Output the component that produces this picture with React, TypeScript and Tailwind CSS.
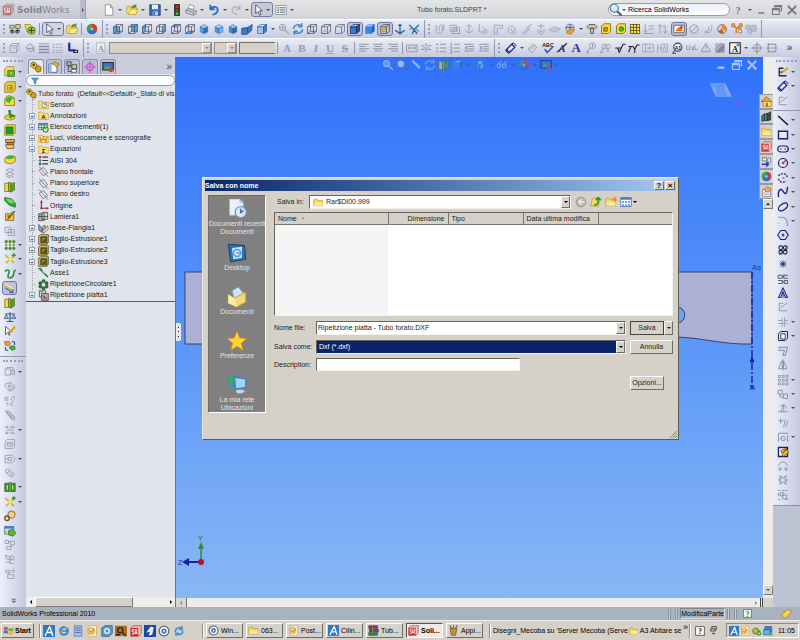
import type { ReactNode } from "react";

const cubeBack = "M2 5l4-3h8v9l-4 3M14 2l-4 3";
const cubeHidden = "M6 2v9h8M6 11l-4 3";
const faces = {
  front: "M2 5h8v9H2z",
  back: "M6 2h8v9H6z",
  left: "M2 5l4-3v9l-4 3z",
  right: "M10 5l4-3v9l-4 3z",
  top: "M2 5l4-3h8l-4 3z",
  bottom: "M2 14l4-3h8l-4 3z",
};

function cube(face?: keyof typeof faces, hidden = true, line = "#454b58"): ReactNode {
  return (
    <g fill="none" stroke={line} strokeWidth=".9">
      {face && <path d={faces[face]} fill="#5aa2e6" stroke="none" />}
      <path d={faces.front} />
      <path d={cubeBack} />
      {hidden && <path d={cubeHidden} />}
    </g>
  );
}

function solid(front: string, top: string, side: string, line = "#1c4f91"): ReactNode {
  return (
    <g stroke={line} strokeWidth=".8">
      <path d={faces.front} fill={front} />
      <path d={faces.top} fill={top} />
      <path d={faces.right} fill={side} />
    </g>
  );
}

function iso(left: string, right: string, top: string): ReactNode {
  return (
    <g stroke="#2a65a8" strokeWidth=".7">
      <path d="M3 5l5 2v7l-5-2z" fill={left} />
      <path d="M13 5l-5 2v7l5-2z" fill={right} />
      <path d="M3 5l5-3 5 3-5 2z" fill={top} />
    </g>
  );
}

function line(d: string, color = "#a0a3af", width = 1.3): ReactNode {
  return <path d={d} fill="none" stroke={color} strokeWidth={width} strokeLinecap="round" strokeLinejoin="round" />;
}

function letter(ch: string, color: string, extra = "", size = 15): ReactNode {
  return (
    <text x="8" y="13.5" textAnchor="middle" fontSize={size} fontWeight="bold" fill={color} className={"font-['Liberation_Serif',serif] " + extra}>
      {ch}
    </text>
  );
}

const folder = (
  <g stroke="#b08a1c" strokeWidth=".8">
    <path d="M1 13V4l1-1h4l1 2h7v8z" fill="#f5d65c" />
    <path d="M2 8h12v5H2z" fill="#fbe98f" stroke="none" />
  </g>
);

const treeFolder = <path d="M1 14V3h5l1 2h8v9z" fill="#fbe27a" stroke="#c9a22c" />;

const icons: Record<string, ReactNode> = {
  sw: (
    <g>
      <path d="M1 4l4-3h10v10l-4 4H1z" fill="#b9a5a8" />
      <path d="M1 4h10v11H1z" fill="#a8757a" />
      {line("M5 6H3v3h2v3H3M7 6v6l1-2 1 2V6", "#f2e8e8", 1.2)}
    </g>
  ),
  new: <path d="M3 1h7l3 4v10H3z M10 1v4h3" fill="#fff" stroke="#80838c" />,
  open: (
    <g>
      {folder}
      <path d="M3 14l3-7h10l-3 7z" fill="#ffe978" stroke="#b08a1c" strokeWidth=".8" />
      {line("M8 5c1-4 4-3 5-1M13 1v3h-3", "#2f9a2f", 1.6)}
    </g>
  ),
  save: (
    <g>
      <path d="M1 1h14v14H1z" fill="#2d6cc0" stroke="#173f78" />
      <path d="M4 1h8v6H4z" fill="#e6f0fb" />
      <path d="M5 10h7v5H5z" fill="#c3cbd8" />
      <path d="M6 11h2v3H6z" fill="#1e3f77" />
    </g>
  ),
  traffic: (
    <g>
      <rect x="4" y="0" width="8" height="16" rx="1" fill="#3b3534" />
      <circle cx="8" cy="3.5" r="2.2" fill="#d9281f" />
      <circle cx="8" cy="8" r="1.8" fill="#6b5b2a" />
      <circle cx="8" cy="12.5" r="2.2" fill="#37b54a" />
    </g>
  ),
  print: (
    <g stroke="#7b7e88" strokeWidth=".9">
      <path d="M4 6l2-5 6 2-1 4z" fill="#fff" />
      <path d="M1 8l4-2 10 3v4l-4 2-10-3z" fill="#c6c9d2" />
      <path d="M1 8l10 3v4M11 11l4-2" fill="none" />
    </g>
  ),
  undo: line("M3 2v5h5M3 7c3-5 10-4 10 1 0 3-3 5-6 6", "#2e6fc0", 2.4),
  redo: line("M13 2v5H8M13 7C10 2 3 3 3 8c0 3 3 5 6 6", "#b4b7c0", 2),
  cursor: <path d="M5 1v12l3-3 2 5 2-1-2-5h4z" fill="#fff" stroke="#33394a" />,
  checklist: (
    <g>
      <path d="M1 2h14v12H1z" fill="#f4f7f4" stroke="#7c8694" />
      {line("M7 5h6M7 8h6M7 11h6", "#5d6978")}
      {line("M3 5l1 1 1-2M3 8l1 1 1-2M3 11l1 1 1-2", "#2c9b49")}
    </g>
  ),
  magnify: (
    <g>
      {line("M9 9l6 6", "#5a6b80", 3)}
      <circle cx="6.5" cy="6.5" r="5" fill="#d4e6f5" stroke="#5b7894" strokeWidth="1.4" />
      <path d="M4 6c0-2 1-3 3-3" fill="none" stroke="#fff" strokeWidth="1.4" />
    </g>
  ),
  minimize: <path d="M3 11h8v2H3z" fill="#777a83" />,
  restore: <path d="M5 5V2h9v7h-3M2 6h9v8H2zM2 7.5h9M5 3.500h9" fill="none" stroke="#777a83" strokeWidth="1.5" />,
  close: line("M3 3l10 10M13 3L3 13", "#777a83", 2.4),
  hudMin: <path d="M2 10h9v3H2z" fill="#a9c6f5" />,
  hudRestore: <path d="M5 5V2h9v7h-3M2 6h9v8H2zM2 7.500h9M5 3.500h9" fill="none" stroke="#a9c6f5" strokeWidth="1.500" />,
  hudClose: line("M3 3l10 10M13 3L3 13", "#a9c6f5", 2.600),
  help: letter("?", "#777a83", "", 14),
  gridA: (
    <g>
      <path d="M1 3h6v4H1zM9 2h6v5H9z" fill="#e8d35c" stroke="#4d5462" />
      {line("M2 10h4M2 12h12M9 10h5M4 9v5M11 8v6", "#34383f")}
    </g>
  ),
  target: (
    <g>
      <path d="M1 2h7l3 3v7H4z" fill="#f1d53c" stroke="#8a7416" strokeWidth=".8" />
      <circle cx="10" cy="10" r="5" fill="#7fc341" stroke="#4e7a1c" />
      {line("M7 10h6M10 7v6", "#274f10")}
    </g>
  ),
  pie: (
    <g>
      <circle cx="8" cy="8" r="7" fill="#2d6ed0" />
      <path d="M8 8V1a7 7 0 0 1 6 10z" fill="#de3a2b" />
      <path d="M8 8V1a7 7 0 0 0-6.200 10z" fill="#3aa946" />
      <circle cx="8" cy="8" r="2" fill="#fff" opacity=".5" />
    </g>
  ),
  cFront: cube("front"),
  cBack: cube("back"),
  cLeft: cube("left"),
  cRight: cube("right"),
  cTop: cube("top"),
  cBottom: cube("bottom"),
  iso1: iso("#5aa0df", "#2f6fb9", "#a6d2f5"),
  iso2: iso("#4f94d8", "#78b3e8", "#b9dcf8"),
  iso3: iso("#3f83cc", "#2b66ad", "#9accf2"),
  wedge: <path d="M1 7l8-1 6-4-1 8-6 5H1z M9 6v8" fill="#3b7fc9" stroke="#174275" />,
  solidBlue: solid("#9cc6ee", "#d2e7fa", "#3e80c9"),
  zoomGrey: (
    <g>
      <circle cx="6" cy="6" r="4" fill="none" stroke="#a4a7b3" strokeWidth="1.500" />
      {line("M9 9l5 5M4 6h4M6 4v4", "#a4a7b3", 1.6)}
    </g>
  ),
  zoomFit: (
    <g>
      <circle cx="6" cy="6" r="4" fill="#7fb0f5" stroke="#c8dcf8" strokeWidth="1.500" />
      {line("M9 9l5 5", "#d9c88c", 2.200)}
    </g>
  ),
  refresh: line("M2 7c1-5 8-6 11-3M13 1v4H9M14 9c-1 5-8 6-11 3M3 15v-4h4", "#3f86cd", 2),
  refreshLt: line("M2 7c1-5 8-6 11-3M13 1v4H9M14 9c-1 5-8 6-11 3M3 15v-4h4", "#8fbcf5", 1.600),
  pen: line("M3 3l9 9M4 2l9 9", "#c9def8", 1.600),
  wire: cube(),
  wireDash: (
    <g>
      {cube(undefined, false)}
      <path d={cubeHidden} fill="none" stroke="#7b7f8a" strokeDasharray="1.500 1.500" />
    </g>
  ),
  wireOpen: cube(undefined, false, "#5a5e68"),
  shadedEdge: solid("#2f7bd2", "#8fc4f2", "#1b56a3", "#0b1e3e"),
  shaded: solid("#3c86dd", "#9accf5", "#2462b4", "#3c86dd"),
  section: (
    <g>
      {cube(undefined, false)}
      <path d="M4 11V8h3l3-3v3l-3 4z" fill="#f4d41f" stroke="#6c5b08" strokeWidth=".7" />
    </g>
  ),
  axis: (
    <g>
      {line("M8 2v11", "#1f6db0", 1.800)}
      <path d="M6 13l2 3 2-3z" fill="#1f6db0" />
      {line("M2 10l6 4 6-4M6 3h4", "#2c5470", 1.500)}
    </g>
  ),
  axisCut: (
    <g>
      {line("M2 3l6 6 4 5M8 9L6 14M8 9l6-6", "#1f6db0", 1.800)}
      {line("M2 8h4M11 8l3 3", "#36a0c9", 1.500)}
    </g>
  ),
  clip: line("M3 3v7c0 5 8 5 8 0V5c0-3-4-3-4 0v5M13 2v8"),
  solidGrey: line("M2 3h8v8H2zM5 6h9v8H5zM7 8h4v3H7z"),
  anchor: line("M8 2v11M5 4h6M3 9c0 5 10 5 10 0"),
  hook: line("M3 2v10h4M7 5l4 4-3 5M11 9c3-1 3 4 0 5"),
  corner: line("M3 14V3h11v4H7v7z"),
  swirl: line("M13 12c-5 4-11 1-10-4s9-5 9 0-6 3-5 0"),
  ramp: line("M2 14l5-4 2-5 5-3M5 14l4-3 2-5"),
  press: line("M8 1v7M4 4h8M3 9l5 3 5-3M3 12l5 3 5-3"),
  sheetG: line("M1 9l6-4 8 3-6 4zM5 9l5-1"),
  globe: (
    <g>
      <circle cx="8" cy="7" r="5.500" fill="#cfd5df" stroke="#576274" />
      <path d="M8 7l6 3-5 5-6-2z" fill="#f29b24" stroke="#9a5b10" strokeWidth=".7" />
      {line("M3 6h9M8 2v5", "#576274")}
    </g>
  ),
  post: (
    <g>
      <path d="M1 5l3-3h8l3 3-2 2H3z" fill="#e3c58a" stroke="#40444e" />
      <path d="M6 7h4v7H6z" fill="#bcc1ca" stroke="#40444e" />
    </g>
  ),
  boxY: (
    <g stroke="#75640a">
      <path d="M2 4l3-3h9v10l-3 3H2z" fill="#f7dc2b" />
      <path d="M5 6h5v5H5z" fill="#b5941a" />
    </g>
  ),
  boxG: (
    <g stroke="#75640a">
      <path d="M2 4l3-3h9v10l-3 3H2z" fill="#f7dc2b" />
      <circle cx="8.500" cy="8" r="3" fill="#43b738" stroke="#1d6b17" />
    </g>
  ),
  boxGrid: <path d="M2 2h12v12H2zM2 6h12M2 10h12M6 2v12M10 2v12" fill="#ffe24b" stroke="#4a3c05" />,
  dimDown: line("M3 2v10M1 10l2 3 2-3M8 4h6M8 8h6M2 14h12"),
  dimUp: line("M4 14V3M2 5l2-3 2 3M8 4h2M11 13V4M13 11l-2 3-2-3"),
  photo: (
    <g>
      <path d="M1 3h14v10H1z" fill="#f7f7f7" stroke="#44454f" />
      <path d="M3 11l5-6 6 6z" fill="#e5721a" />
      <circle cx="11" cy="6" r="2" fill="#c63d11" />
    </g>
  ),
  sphereG: (
    <g fill="none" stroke="#9497a3" strokeWidth="1.300">
      <circle cx="8" cy="8" r="5.500" />
      <path d="M4 12L12 4" />
    </g>
  ),
  shellG: line("M13 3c1 9-3 11-9 10 4-1 6-4 5-8M4 11c2 1 4 0 5-2"),
  sphereO: (
    <g>
      <circle cx="8" cy="8" r="6" fill="#c2cedd" stroke="#5c6880" />
      <path d="M8 8V2a6 6 0 0 1 5 9z" fill="#ef8b22" />
      <path d="M8 8l-5 3a6 6 0 0 0 7 2z" fill="#c65d12" />
    </g>
  ),
  network: (
    <g>
      {line("M3 3l4 4v6M7 7l6-4M7 7h6v6", "#e57d18", 2)}
      <path d="M1 1h4v4H1zM11 1h4v4h-4z" fill="#f6ad55" stroke="#935312" strokeWidth=".8" />
      <path d="M10 9h4v4h-4z" fill="#fff" stroke="#777" />
    </g>
  ),
  blocksG: <path d="M1 3h6v5H1zM9 3h6v8H9zM4 9h5v5H4z" fill="#c0c3cd" stroke="#a0a3af" />,
  blockG: line("M2 5h8v9H2zM2 5l3-3h8l-3 3M13 2v8l-3 4M5 8h3"),
  bucket: line("M3 7l5-5 6 6-5 5zM5 9l7-1M13 9v4", "#8d909c"),
  lines: <path d="M1 2h14v1H1zM1 5h14v2H1zM1 9h14v2H1zM1 13h14v2H1z" fill="#888b96" />,
  dashes: <path d="M1 3h14M1 7h14M1 11h14M1 14h14" stroke="#8d909c" strokeDasharray="3 1.500" />,
  flange: (
    <g>
      {line("M3 2v9h7", "#1d2f9b", 3)}
      {line("M9 11h5v3h-5z", "#252a4e", 1.600)}
    </g>
  ),
  fontA: (
    <g>
      <path d="M2 1h11v14H2z" fill="#e9ebf2" stroke="#aeb1bc" />
      {letter("A", "#8d909c", "", 11)}
    </g>
  ),
  A: letter("A", "#989ba8"),
  B: letter("B", "#989ba8"),
  I: letter("I", "#989ba8", "italic"),
  U: letter("U", "#989ba8", "underline"),
  S: letter("S", "#989ba8", "line-through"),
  alignL: line("M2 3h12M2 6h8M2 9h12M2 12h8", "#9295a1", 1.4),
  alignC: line("M2 3h12M4 6h8M2 9h12M4 12h8", "#9295a1", 1.4),
  alignR: line("M2 3h12M6 6h8M2 9h12M6 12h8", "#9295a1", 1.4),
  fit: line("M1 4h14v9H1zM4 8h8M5 6L3 8l2 2M11 6l2 2-2 2", "#9295a1"),
  gaps: line("M2 5h3M2 10h3M11 5h3M11 10h3M8 2v3M8 10v3M5 8h6", "#9295a1", 1.6),
  bullets: (
    <g>
      {line("M7 3h7M7 8h7M7 13h7", "#9295a1", 1.4)}
      <path d="M2 2h2v2H2zM2 7h2v2H2zM2 12h2v2H2z" fill="#9295a1" />
    </g>
  ),
  numbers: line("M7 3h7M7 8h7M7 13h7M3 1v4M2 7h2v3H2M2 12h2v3H2", "#9295a1"),
  indentL: line("M2 3h12M8 6h6M8 9h6M2 12h12M6 6L3 8l3 2", "#9295a1", 1.4),
  indentR: line("M2 3h12M8 6h6M8 9h6M2 12h12M3 6l3 2-3 2", "#9295a1", 1.4),
  smartDim: (
    <g>
      <path d="M2 10l7-7 4 4-7 7z" fill="#e8ecfa" stroke="#1f2c8f" strokeWidth="1.800" />
      {line("M2 10l-1 2 4 3M9 3l2-2 4 4", "#10143c")}
    </g>
  ),
  dimGrey: line("M2 9l6-6 5 4-6 7zM5 9l4-3", "#9a9daa"),
  abc: (
    <g>
      <text x="8" y="6" textAnchor="middle" fontSize="7" fontWeight="bold" fill="#222">
        ABC
      </text>
      {line("M4 10l3 4 7-7", "#3050c0", 2)}
    </g>
  ),
  painter: (
    <g>
      {letter("A", "#243a9c", "italic", 14)}
      {line("M8 8l6-6M2 13l5-4", "#3a3d48", 2)}
    </g>
  ),
  note: letter("A", "#1d37ac", "", 17),
  balloon: (
    <g>
      <circle cx="10" cy="5" r="4" fill="none" stroke="#9295a1" />
      {line("M7 8l-5 6h3M10 3v4", "#9295a1")}
    </g>
  ),
  balloons: (
    <g>
      <circle cx="7" cy="6" r="3.500" fill="none" stroke="#9295a1" />
      <circle cx="12" cy="6" r="3" fill="none" stroke="#9295a1" />
      {line("M6 9l-4 5h3M7 5v2M12 9v4", "#9295a1")}
    </g>
  ),
  finish: line("M2 8h3l2 6 5-11h3M5 8h4", "#24262e", 1.5),
  weld: line("M1 13l3-7h3l2 4 3-6h3M1 6h6M9 10v4", "#24262e", 1.5),
  frameG: line("M1 3h14v10H1zM5 3v10M8 8h4M10 6v4", "#a4a7b3"),
  datum: line("M1 3v11M1 8h5M6 3h8v10H6zM8 11l2-6 2 6", "#a4a7b3"),
  area: (
    <g>
      <circle cx="9" cy="7" r="5.500" fill="#e9ecf4" stroke="#3c404c" strokeWidth="1.400" />
      <text x="9" y="10" textAnchor="middle" fontSize="7" fontWeight="bold" fill="#222">
        A1
      </text>
      {line("M5 11l-3 4h4", "#3c404c")}
    </g>
  ),
  hole: line("M1 5v5h4V5M8 11l4-7M9 7a2 2 0 1 0 3 0M13 10h2", "#9295a1"),
  tri: line("M8 2l6 11H2zM8 6v3M8 11v0", "#9295a1"),
  hatch: (
    <g>
      <path d="M2 2h12v12H2z" fill="#8d919d" />
      <path d="M2 2h12L2 14z" fill="#b9bcc6" />
      {line("M3 13L13 3M6 14l8-8M2 10l8-8", "#62656f", 0.8)}
    </g>
  ),
  blockA: (
    <g>
      <path d="M1 1h14v14H1z" fill="#f7f8fb" stroke="#222" strokeWidth="1.400" />
      {letter("A", "#14161d", "", 11)}
      <circle cx="12" cy="4" r="1.500" fill="none" stroke="#333" />
    </g>
  ),
  center: (
    <g>
      <circle cx="8" cy="8" r="5" fill="none" stroke="#858894" />
      {line("M8 1v14M1 8h14", "#858894")}
    </g>
  ),
  centerLine: line("M3 2v12M3 3h10v3M3 13h10v-3M1 8h3M6 8h2M10 8h5", "#858894"),
  treePart: (
    <g stroke="#54440a" strokeWidth=".9">
      <path d="M1 3l4-2 4 3v5l-4 1-4-3z" fill="#f3cb2e" />
      <path d="M8 8l4-2 3 3-1 5-4 1-3-3z" fill="#d79e1b" />
      <circle cx="5" cy="5" r="1.500" fill="#7a5c09" />
    </g>
  ),
  props: (
    <g>
      <path d="M1 4h11v11H1z" fill="#fff" stroke="#3f5f92" strokeWidth="1.200" />
      <path d="M1 4h4v11H1z" fill="#9ebce0" />
      <path d="M6 3l3-2 6 3-4 4z" fill="#f0a94f" stroke="#8d5112" strokeWidth=".8" />
    </g>
  ),
  config: (
    <g stroke="#343a45">
      <path d="M1 1h6v5H1z" fill="#8fb5dd" />
      <path d="M8 5h6v5H8z" fill="#ecd15a" />
      <path d="M7 11h7v4H7z" fill="#fff" />
      <path d="M3 6v8h4M3 8h5" fill="none" />
    </g>
  ),
  dimxpert: (
    <g fill="none" stroke="#c954c8" strokeWidth="1.600">
      <circle cx="8" cy="8" r="4.500" />
      <path d="M8 0v16M0 8h16" />
    </g>
  ),
  display: (
    <g>
      <path d="M1 2h14v10H1z" fill="#3a76c8" stroke="#1f2430" strokeWidth="1.400" />
      <path d="M2 11l5-5 6 5z" fill="#57ad4d" />
      <circle cx="12" cy="12" r="3" fill="#d8402c" />
    </g>
  ),
  funnel: <path d="M1 2h14l-5 6v6l-4-2V8z" fill="#4fa3e2" stroke="#1d5b95" />,
  sensors: (
    <g>
      {treeFolder}
      <circle cx="9" cy="9" r="3.500" fill="#fff" stroke="#565b66" />
      {line("M9 9l2-2", "#333")}
    </g>
  ),
  annot: (
    <g>
      {treeFolder}
      <text x="8" y="13" textAnchor="middle" fontSize="9" fontWeight="bold" fill="#222">
        A
      </text>
    </g>
  ),
  lights: (
    <g>
      {treeFolder}
      {line("M4 13a4 4 0 0 1 8 0M8 7V5M4 9L3 7M12 9l1-2", "#d8681a", 1.6)}
    </g>
  ),
  equations: (
    <g>
      {treeFolder}
      <text x="8" y="13" textAnchor="middle" fontSize="9" fontWeight="bold" fill="#222">
        Σ
      </text>
    </g>
  ),
  cutlist: (
    <g>
      <path d="M1 2h13v9H1z" fill="#eef5ee" stroke="#37474f" />
      <path d="M1 2h13v3H1z" fill="#4c89a8" />
      {line("M1 8h13M5 5v6M9 5v6", "#37474f", 0.9)}
      <circle cx="11" cy="11" r="4" fill="#58b84b" stroke="#226b1a" />
      {line("M9 11l2 2 2-3", "#fff", 1.5)}
    </g>
  ),
  material: (
    <g>
      <circle cx="3" cy="3" r="2" fill="#c73333" />
      <circle cx="3" cy="8" r="2" fill="#3a9b46" />
      <circle cx="3" cy="13" r="2" fill="#3454b4" />
      {line("M7 3h7M7 8h7M7 13h7", "#333842", 1.800)}
    </g>
  ),
  plane: line("M2 6l6-4 6 8-6 4zM2 1l12 14", "#6a6e78", 1.100),
  origin: (
    <g>
      {line("M5 2v10h9", "#b5283a", 1.800)}
      <path d="M3 4l2-4 2 4zM12 10l4 2-4 2z" fill="#b5283a" />
      <circle cx="5" cy="12" r="1.500" fill="#24337c" />
    </g>
  ),
  sheetM: (
    <g stroke="#2e3138">
      <path d="M1 4h7v10H1z" fill="#a8abb2" />
      <path d="M6 2h8v10H6z" fill="#d6d4c4" />
      <path d="M1 8h13M9 2v12" fill="none" />
    </g>
  ),
  baseFlange: (
    <g stroke="#333842" strokeWidth=".8">
      <path d="M1 2l5 6v6l-5-4z" fill="#6ea3dd" />
      <path d="M6 10l8-6 1 5-7 6z" fill="#d5d7dd" />
      <path d="M6 6l4-3 1 5-4 3z" fill="#eda544" />
    </g>
  ),
  cutExt: (
    <g stroke="#3c3206">
      <path d="M1 3l3-2h11v11l-2 3H1z" fill="#e2c95a" />
      <path d="M4 4h9v9H4z" fill="#5f6d2e" />
      <path d="M6 6h5v5H6z" fill="#f8efa8" />
      <path d="M8 8h2v2H8z" fill="#2a8430" />
    </g>
  ),
  axisLine: (
    <g>
      {line("M1 2l13 12", "#2f8c45", 1.600)}
      {line("M3 2l3 3M10 10l4 4", "#1e5a2c", 1.600)}
    </g>
  ),
  circPat: (
    <g fill="#2f7f3a" stroke="#0f3014" strokeWidth=".8">
      <circle cx="8" cy="3" r="2.200" />
      <circle cx="3.500" cy="6" r="2.200" />
      <circle cx="12.500" cy="6" r="2.200" />
      <circle cx="3.500" cy="11" r="2.200" />
      <circle cx="12.500" cy="11" r="2.200" />
      <circle cx="8" cy="13.500" r="2.200" />
    </g>
  ),
  flat: (
    <g stroke="#2c2f38">
      <path d="M2 1h9v9H2z" fill="#e8e1d2" />
      <path d="M5 5h10v10H5z" fill="#9db3d2" />
      <path d="M4 3h3M7 8l6 5M7 12h3" fill="none" stroke="#a33b2c" strokeWidth="1.500" />
    </g>
  ),
  extrude: (
    <g stroke="#8a7208" strokeWidth=".9">
      <path d="M1 4l3-3h9v9l-3 3H1z" fill="#f8e04a" />
      <path d="M5 6h9v8H5z" fill="#55c03b" stroke="#246f17" />
      <path d="M8 8h3v3H8z" fill="#eef7c0" />
    </g>
  ),
  cutY: (
    <g stroke="#8a7208">
      <path d="M1 4l3-3h11v11l-3 3H1z" fill="#e9c938" />
      <path d="M5 6h6v6H5z" fill="#fff0a0" />
      <path d="M7 8h3v2H7z" fill="#b07a18" />
    </g>
  ),
  filletY: (
    <g>
      <path d="M1 14V7a6 6 0 0 1 7-6l6 3v10z" fill="#f5dc3a" stroke="#8a7208" />
      <path d="M2 8c0-4 3-6 6-6l6 3c-4 0-6 2-6 6z" fill="#41b830" />
    </g>
  ),
  rib: (
    <g strokeWidth=".9">
      <path d="M1 10l6-3 8 2-1 4-6 2-7-2z" fill="#ecd033" stroke="#8a7208" />
      <path d="M6 2h3v5l5 2-6 3z" fill="#37ab2a" stroke="#1d6b17" />
    </g>
  ),
  shellY: (
    <g>
      <path d="M1 3l2-2h12v11l-3 3H1z" fill="#f2dc3e" stroke="#6f7a10" />
      <path d="M3 4h9v9H3z" fill="#16a024" stroke="#0d6316" />
    </g>
  ),
  draft: (
    <g stroke="#5c3a12" strokeWidth=".9">
      <path d="M2 2h12v4H2z" fill="#e9a23c" />
      <path d="M4 6h9v3H4z" fill="#8c8f9a" />
      <path d="M2 9h11v5H4z" fill="#f3cd4d" />
    </g>
  ),
  dome: (
    <g>
      <path d="M1 7c4-4 9-4 14-2v6c-5 4-9 4-14 1z" fill="#f3dc3a" stroke="#7c7208" />
      <path d="M2 7c4-4 9-4 12-2-3 4-8 4-12 2z" fill="#45b434" />
    </g>
  ),
  linkG: line("M3 4l5-2 5 2-5 3zM3 9l5-2 5 2-5 3zM3 12l4 2M9 14l4-2"),
  mirror: (
    <g stroke="#6a6108" strokeWidth=".9">
      <path d="M1 3h5v11H1z" fill="#f3d93c" />
      <path d="M9 4l5-2v10l-5 3z" fill="#3fae2f" />
      <path d="M6 2h3v12H6z" fill="#79c35e" />
    </g>
  ),
  surface: (
    <g>
      <path d="M1 2l9 2 5 6v5l-8-3-6-6z" fill="#2cb02c" stroke="#145e16" />
      <path d="M2 3l8 2 4 5-7-1z" fill="#7cdc6a" />
    </g>
  ),
  wrap: (
    <g>
      <path d="M2 5h11v9H2z" fill="#e8c741" stroke="#7c6208" />
      {line("M5 12l9-10M5 8h4", "#8d3418", 1.500)}
      <path d="M10 2h3v3h-3z" fill="#3fae2f" />
    </g>
  ),
  intersect: line("M2 3h7v7H2zM6 6h8v8H6zM9 9h2v2H9z"),
  linPat: (
    <g fill="#3da02e" stroke="#4d6a1b" strokeWidth=".6">
      {[3, 8, 13].map((x) => (
        <g key={x}>
          <circle cx={x} cy="3.500" r="1.800" />
          <circle cx={x} cy="8" r="1.300" fill="#e0b630" />
          <circle cx={x} cy="12.500" r="1.800" />
        </g>
      ))}
    </g>
  ),
  refGeo: (
    <g>
      {line("M2 3l11 10M3 13L14 3", "#b9b324", 1.800)}
      {line("M11 3h4M13 1v4", "#3c9a2c", 1.800)}
      <circle cx="8" cy="8" r="2.500" fill="#ffe94d" />
    </g>
  ),
  curve: line("M2 4c4-3 6 0 4 4s1 7 5 4 0-8 4-9", "#2a8a3c", 2.200),
  instant: (
    <g>
      {line("M2 4l9 7", "#e2b82a", 3)}
      {line("M2 8l9 6M12 10v4H8", "#3b6cc0", 1.700)}
      {line("M2 3l10 6", "#fff")}
    </g>
  ),
  scales: (
    <g>
      {line("M8 2v12M2 4h12M4 14h8", "#2c5ca0", 1.600)}
      <path d="M0 10l3-5 3 5zM10 10l3-5 3 5z" fill="#e0b83c" stroke="#2c5ca0" />
    </g>
  ),
  sketchEdit: (
    <g>
      <path d="M2 2v11l3-3 2 4 1-1-2-4h4z" fill="#fff" stroke="#333842" />
      {line("M9 9l5-6", "#d8a81c", 3)}
    </g>
  ),
  swap: (
    <g>
      <path d="M1 2h6l2 3-4 3-4-2z" fill="#f09a32" stroke="#93520e" strokeWidth=".8" />
      <path d="M8 8h6l1 4-4 2-4-3z" fill="#42b735" stroke="#1d6b17" strokeWidth=".8" />
      {line("M11 2l3 1v3M2 10v3l3 1", "#2c4fa8", 1.500)}
    </g>
  ),
  asm1: line("M2 4h7v8H2zM4 4V2h8v3M9 6h5v5H9M11 8h1"),
  asm2: line("M2 4l6-2 6 4v4l-6 4-6-6zM6 6l6 2-4 4zM8 2v4"),
  asm3: line("M2 3h3v4H2zM10 3l4-1v3M9 6c4 0 4 4 1 5M3 11h2v3M8 12l4 2"),
  clipG: line("M2 3l9 11c3 1 4-1 3-3L6 3C4 2 3 3 4 5l7 7", "#9a9daa", 1.500),
  dotsG: line("M3 3h2v2H3zM11 3h2v2h-2zM3 11h2v2H3zM11 11h2v2h-2zM8 4v1M8 11v1M4 8h8"),
  plateG: line("M2 5l2-3h10v9l-2 3H2zM5 6h6v5H5zM5 8h6"),
  tagG: line("M2 3h7c7 0 7 10 0 10H2zM6 6h4v4H6zM2 8h4"),
  washers: line("M2 4l4-2 8 8-3 4-8-6zM6 5l5 5M4 8l4-3M8 12l4-3"),
  greenComp: (
    <g stroke="#14591a" strokeWidth=".8">
      <path d="M1 3h14v11H1z" fill="#35a83a" />
      <path d="M3 5h3v7H3zM10 5h3v7h-3z" fill="#f0de62" />
      <path d="M7 2h2v12H7z" fill="#cfe8c8" />
    </g>
  ),
  gears: (
    <g fill="none">
      <circle cx="10" cy="6" r="4.500" stroke="#c98a15" strokeWidth="2" />
      <circle cx="10" cy="6" r="1.500" fill="#e6c13c" />
      <circle cx="4" cy="11" r="3" stroke="#6a5012" strokeWidth="1.800" />
    </g>
  ),
  glasses: (
    <g fill="none" stroke="#a8c5ee" strokeWidth="1.500">
      <circle cx="4" cy="9" r="2.500" />
      <circle cx="11" cy="9" r="2.500" />
      <path d="M4 6l3-3M11 6l3-3" stroke="#c9b46a" />
    </g>
  ),
  bom: (
    <g>
      <path d="M1 2h12v10H1z" fill="#e9f4fb" stroke="#274e73" />
      <path d="M1 2h12v3H1z" fill="#3d86c2" />
      <path d="M6 7l6-1 4 5-4 4-6-2z" fill="#58b83b" stroke="#2b6e18" />
      <path d="M2 7h3v4H2z" fill="#e8cd3a" />
    </g>
  ),
  explode: line("M2 2h4v4H2zM9 3h5v5H9zM4 10h5v4H4zM6 4h3M11 8l-2 4"),
  explode2: line("M2 3l5 2 1 4-4-1zM9 4h4v5H9zM3 12h5M8 9v5h4"),
  explode3: line("M3 3h5v3H3zM6 6v3h7v5H5V9M10 4l3-2v4"),
  sketch: (
    <g>
      {line("M12 13H3V3h5", "#26293a", 1.800)}
      {line("M6 9l8-6", "#e09a1c", 2.500)}
      {line("M3 8h4", "#26293a")}
    </g>
  ),
  sketchG: line("M13 13H3V3h5M5 9l8-6", "#9295a1", 1.300),
  ln: line("M2 3l12 11", "#14173d", 2),
  rect: <path d="M2 3h12v10H2z" fill="#e6e9fa" stroke="#1d1f7c" strokeWidth="1.800" />,
  slot: (
    <g fill="none" stroke="#1d1f7c" strokeWidth="1.600">
      <rect x="1" y="4" width="14" height="8" rx="4" />
      <path d="M4 8h2M10 8h2" stroke="#b13a5c" strokeWidth="2" />
    </g>
  ),
  circ: (
    <g fill="none" stroke="#1d1f7c" strokeWidth="1.600">
      <circle cx="8" cy="8" r="6" />
      <circle cx="8" cy="8" r="1" stroke="#b13a5c" />
      <path d="M9 7l3-3" stroke="#b13a5c" />
    </g>
  ),
  arc: (
    <g fill="none" stroke="#14173d" strokeWidth="1.600">
      <path d="M2 5c5-5 11-3 12 3" strokeDasharray="2.500 1.500" />
      <path d="M2 9c1 5 7 6 10 3" strokeDasharray="2.500 1.500" />
      <path d="M7 8h3" stroke="#b13a5c" />
    </g>
  ),
  spline: line("M2 14C1 5 5 2 8 7s5 4 6-5", "#1d1f7c", 1.900),
  ellipse: <ellipse cx="8" cy="8" rx="7" ry="4" fill="none" stroke="#1d1f7c" strokeWidth="1.700" transform="rotate(-38 8 8)" />,
  filletG: line("M2 3h5c5 0 7 4 7 11M2 11v0", "#9295a1", 1.400),
  polygon: (
    <g fill="none" stroke="#1d1f7c" strokeWidth="1.500">
      <path d="M5 2h6l4 6-4 6H5L1 8z" />
      <path d="M6 8h4M8 6v4" />
    </g>
  ),
  textSk: (
    <g fill="none" stroke="#20233f" strokeWidth="1.400">
      <circle cx="5" cy="5" r="2.500" />
      <circle cx="11" cy="5" r="2.500" />
      <circle cx="5" cy="11" r="2.500" />
      <circle cx="11" cy="11" r="2.500" />
      <path d="M3 14L14 3" stroke="#4a4fb5" />
    </g>
  ),
  point: line("M8 4v8M4 8h8M5 5l6 6M11 5l-6 6", "#1d1f7c", 1.300),
  planeSk: line("M2 3h5v4H2zM9 3h5M9 3v4h5M2 10h5M7 10v4H2M10 10h4v4h-4zM7 5h2M7 12h3", "#5d6070"),
  mirrorA: (
    <g>
      {line("M8 1L2 14h3l3-8 3 8h3z", "#2a2c85", 1.400)}
      {line("M8 9v5", "#2a2c85", 1.200)}
    </g>
  ),
  trimG: line("M2 6h5V3M7 6v8M10 2v12M2 10h12M10 6h4"),
  convert: (
    <g stroke="#23262f" strokeWidth="1.300">
      <path d="M2 5l3-3h9v9l-3 3H2z" fill="#e7eafa" />
      <path d="M5 5h6v7H5z" fill="#fff" stroke="#223b8c" />
    </g>
  ),
  offset: line("M2 3h12l-3 11H8l2-7H2M4 5h0", "#858894"),
  mirG: line("M6 3L2 13h5V3zM9 3l4 10H9zM8 1v14", "#8f929e"),
  grid9: (
    <g fill="none" stroke="#8f929e">
      {[2, 7, 12].map((x) => [2, 7, 12].map((y) => <rect key={`${x}-${y}`} x={x} y={y} width="2.500" height="2.500" />))}
    </g>
  ),
  moveG: line("M2 3h5v5H2zM9 8h5v6H9zM4 8v4h5", "#8f929e"),
  relG: line("M2 13h12M5 13L9 3v10M4 6c3-3 8-2 9 2", "#8f929e"),
  plusLine: line("M2 5h6M5 2v6M9 13l2-9M12 13l2-7", "#8f929e"),
  rapid: line("M2 14V3h12M5 10a3 3 0 1 0 6 0 3 3 0 1 0-6 0M8 10v0M14 6v8", "#8f929e"),
  ySketch: (
    <g>
      <path d="M2 2h12v12H2z" fill="#fff" stroke="#151a85" strokeWidth="1.800" />
      <path d="M5 6l8-3 2 6-7 5z" fill="#f0c42b" stroke="#5d4708" />
      {line("M8 9l5-5", "#7c2b12", 1.400)}
    </g>
  ),
  repair: line("M2 7c3-6 9-6 12 0M2 12h4M10 12h4M4 10v4M12 10v4", "#8f929e"),
  pick1: line("M3 3h3M10 3h3M3 13h3M10 13h3M5 5h6v6H5zM3 6v3M13 7v3", "#8f929e"),
  pick2: line("M2 2h2M12 2h2M2 14h2M12 14h2M5 5h4v4H5zM8 8h5v5H8zM2 6v3M7 2h3", "#8f929e"),
  home: (
    <g>
      <path d="M1 8l7-6 7 6v7H3V8z" fill="#f8e08a" stroke="#a27517" />
      <path d="M0 8l8-7 8 7z" fill="#e8a42b" stroke="#8d5512" strokeWidth=".8" />
      <path d="M7 10h3v5H7z" fill="#a86c20" />
    </g>
  ),
  library: (
    <g stroke="#1b2430">
      <path d="M1 7l4-3v10l-4 1z" fill="#3b7fb5" />
      <path d="M5 5l4-2v11H5z" fill="#4b9a54" />
      <path d="M9 4l5-3v12l-5 1z" fill="#35435e" />
    </g>
  ),
  swRed: (
    <g>
      <path d="M1 4l3-3h11v10l-3 4H1z" fill="#e8c0c0" stroke="#8b1a1f" strokeWidth=".7" />
      <path d="M1 4h10v11H1z" fill="#d12a2e" />
      {line("M5 6H3v3h2v3H3M7 6v6l1-2 1 2V6", "#fff", 1.200)}
    </g>
  ),
  palette: (
    <g>
      <path d="M2 2h6v5H2zM10 3h4v6h-4z" fill="#eff" stroke="#555b68" />
      <path d="M3 3h3v2H3z" fill="#dfc433" />
      {line("M2 12h8M8 9l3 3-3 3", "#2237bc", 1.900)}
    </g>
  ),
  custProps: (
    <g>
      <path d="M2 5h12v10H2z" fill="#fff" stroke="#666b78" />
      {line("M4 10h8M4 12h8", "#a5a8b2")}
      <path d="M5 4l4-3 6 3-3 4H6z" fill="#edb05a" stroke="#8d5512" strokeWidth=".8" />
    </g>
  ),
  folder,
  recent: (
    <g>
      <path d="M2 0h8l3 3v10H2z" fill="#e8f1fc" stroke="#9db5d4" strokeWidth=".6" />
      <path d="M10 0v3h3z" fill="#a9c4e4" />
      <circle cx="11" cy="10.500" r="4.500" fill="#d6e6f7" stroke="#6d95c4" />
      {line("M11 8v3l2-1.500", "#2d4f86", 0.9)}
    </g>
  ),
  desktop: (
    <g>
      <path d="M1 1l13 1 1 11-12 2z" fill="#2c6fb8" stroke="#163f74" strokeWidth=".8" />
      <path d="M4 4l8-1v9l-7 1z" fill="#c8e2f6" />
      <circle cx="8" cy="8" r="2.800" fill="none" stroke="#5ba0d8" strokeWidth="1.300" />
      {line("M8 8h4", "#5ba0d8", 1.300)}
      {line("M13 5l3 0", "#c04028", 1.200)}
    </g>
  ),
  documents: (
    <g>
      <path d="M4 3l5-3 5 6-8 4z" fill="#cfe2f5" stroke="#7e9cc2" strokeWidth=".6" />
      <path d="M1 6l5 3 9-5v8l-7 4-7-3z" fill="#f5d872" stroke="#c49a2c" strokeWidth=".7" />
      <path d="M1 6l5 3 2 7-7-3z" fill="#fbeaa3" />
    </g>
  ),
  star: <path d="M8 0l2.200 5.500 5.800.4-4.500 3.800 1.500 5.800-5-3.200-5 3.200 1.500-5.800L0 5.900l5.800-.4z" fill="#ffd23a" stroke="#c48c12" strokeWidth=".6" />,
  netPlaces: (
    <g>
      <circle cx="5" cy="5" r="4.800" fill="#2f8fc4" />
      <path d="M2 2c3-2 5 0 4 2s-3 2-2 5C1 8 0 5 2 2z" fill="#3fae4b" />
      <path d="M6 2l9 1v7l-8 1z" fill="#9fd4fa" stroke="#3b78b4" strokeWidth=".8" />
      <path d="M7 13c0-2 7-2 7 0s-7 3-7 0z" fill="#ccd4ea" stroke="#8790b4" strokeWidth=".6" />
    </g>
  ),
  back: (
    <g>
      <circle cx="8" cy="8" r="6.500" fill="#b9b7b1" stroke="#8d8b86" />
      {line("M12 8H5M8 5L5 8l3 3", "#efefec", 1.800)}
    </g>
  ),
  up: (
    <g>
      <path d="M1 13l2-9 5-2 5 2-2 10z" fill="#f5dc62" stroke="#b08a1c" strokeWidth=".8" />
      {line("M6 12c5 0 5-3 5-8M8 5l3-3 3 3", "#2c8c2a", 2)}
    </g>
  ),
  newFolder: (
    <g>
      {folder}
      {line("M13 1v6M10 4h6M11 2l4 4M15 2l-4 4", "#ed7a22", 1)}
    </g>
  ),
  views: (
    <g>
      <path d="M1 2h14v12H1z" fill="#fff" stroke="#2d65b3" />
      <path d="M1 2h14v3H1z" fill="#3f82d8" />
      <path d="M3 7h2v2H3zM7 7h2v2H7zM11 7h2v2h-2zM3 11h2v2H3zM7 11h2v2H7zM11 11h2v2h-2z" fill="#2e62a8" />
    </g>
  ),
  win: (
    <g>
      <path d="M1 4c2-2 4-2 6 0v4C5 6 3 6 1 8z" fill="#e2502c" />
      <path d="M8 4c2 2 4 2 7 0v4c-3 2-5 2-7 0z" fill="#65ad35" />
      <path d="M1 9c2-2 4-2 6 0v4c-2-2-4-2-6 0z" fill="#3d73cf" />
      <path d="M8 9c2 2 4 2 7 0v4c-3 2-5 2-7 0z" fill="#efb728" />
    </g>
  ),
  acad: (
    <g>
      <path d="M0 0h16v16H0z" fill="#2c78cc" />
      {line("M3 14L9 2l4 12M5 10h6", "#fff", 1.800)}
    </g>
  ),
  ie: (
    <g>
      <circle cx="8" cy="8" r="5" fill="none" stroke="#2b83d0" strokeWidth="2.800" />
      {line("M4 8h8", "#2b83d0", 2)}
      {line("M2 13C0 11 10 1 14 3", "#e6b93a", 1.300)}
    </g>
  ),
  notepad: (
    <g>
      <path d="M3 1h10v14H3z" fill="#a9c1ea" stroke="#5571aa" />
      {line("M5 4h6M5 7h6M5 10h6", "#5571aa")}
    </g>
  ),
  outlook: (
    <g>
      <path d="M3 1h11v14H3z" fill="#fbf4dc" stroke="#d5ac4e" />
      <circle cx="7" cy="8" r="4.500" fill="#f7d88a" stroke="#c8922c" strokeWidth="1.200" />
      {line("M5 8l2 2 3-4", "#9c6c18")}
    </g>
  ),
  desk: (
    <g>
      <path d="M1 4l4-3h10v10l-4 4H1z" fill="#5a9bc8" stroke="#245580" />
      <circle cx="8" cy="8" r="4" fill="#e9f4fb" />
      {line("M6 8h4M8 6v4", "#2b6fb3")}
    </g>
  ),
  brown: (
    <g>
      <path d="M0 1h16v14H0z" fill="#a86f26" />
      <circle cx="7" cy="7" r="3.500" fill="none" stroke="#40250a" strokeWidth="1.800" />
      {line("M10 10l4 4M2 13h4", "#40250a", 1.800)}
    </g>
  ),
  blueDoc: (
    <g>
      <path d="M0 0h16v16H0z" fill="#1746a6" />
      <path d="M9 2l4 1-2 10-5 1 2-5-5 1z" fill="#e7eefb" />
    </g>
  ),
  media: (
    <g>
      <circle cx="8" cy="8" r="6.500" fill="#f5f8fc" stroke="#5a6270" strokeWidth="1.600" />
      <circle cx="8" cy="8" r="3.500" fill="#2f6fc9" />
      <path d="M7 6l3 2-3 2z" fill="#fff" />
    </g>
  ),
  sync: line("M3 9c0-5 6-7 9-4M12 2v4H9M13 8c0 5-6 6-9 3M4 14v-3h3", "#3c96d6", 2.200),
  rar: (
    <g stroke="#222" strokeWidth=".6">
      <path d="M1 1h13v4H1z" fill="#a52a6c" />
      <path d="M2 6h13v4H2z" fill="#2c5fae" />
      <path d="M1 11h13v4H1z" fill="#2c8a3e" />
      <path d="M6 1h2v14H6z" fill="#d8b24c" />
    </g>
  ),
  tulip: (
    <g>
      <path d="M3 5h10l-2 10H5z" fill="#bf8f4c" stroke="#6e4a18" />
      {line("M5 5L3 1M8 5V1M11 5l2-4", "#56763a", 1.800)}
    </g>
  ),
  helpGreen: (
    <g>
      <path d="M1 1h14v14H1z" fill="#f2fbf0" stroke="#2f8a42" strokeWidth="1.400" />
      {letter("?", "#17883a", "", 14)}
    </g>
  ),
  helpBox: (
    <g>
      <path d="M1 1h14v14H1z" fill="#fff" stroke="#444" strokeWidth="1.300" />
      {letter("?", "#222", "", 13)}
    </g>
  ),
  tag: (
    <g>
      <path d="M1 10l8-8 4 1 2 4-8 8-4-1z" fill="#f2c53a" stroke="#a67c12" />
      {line("M4 10l6-6M6 12l6-6", "#fbe69a")}
    </g>
  ),
  shieldG: (
    <g>
      <circle cx="6" cy="8" r="5" fill="#b7a23c" stroke="#55631c" />
      <circle cx="11" cy="11" r="4" fill="#3c9a3a" />
      {line("M3 5l5 5M9 11l2 2 3-4", "#e7f0d0", 1.300)}
    </g>
  ),
  trayNet: (
    <g>
      <path d="M3 1h11v9H3z" fill="#3a86d6" stroke="#1e4f8a" />
      <path d="M1 6h10v8H1z" fill="#68b5ee" stroke="#1e4f8a" />
      <path d="M9 11h6v4H9z" fill="#48b04c" />
    </g>
  ),
  restoreTray: <path d="M5 4V1h8v5h-2M3 5h8v4H3zM6 13h4l-2 2z" fill="none" stroke="#333" strokeWidth="1.500" />,
};

function Icon({ name, className = "size-3" }: { name: string; className?: string }) {
  return (
    <svg viewBox="0 0 16 16" className={`shrink-0 ${className}`} aria-hidden="true">
      {icons[name]}
    </svg>
  );
}

function Caret({ className = "text-[#4a4f60]" }: { className?: string }) {
  return (
    <svg viewBox="0 0 4 2" className={`h-[2px] w-1 shrink-0 ${className}`} aria-hidden="true">
      <path d="M0 0h4L2 2z" fill="currentColor" />
    </svg>
  );
}

function MenuCaret() {
  return (
    <button aria-label="Altro" className="flex w-2 shrink-0 items-center justify-center">
      <Caret />
    </button>
  );
}

function Handle() {
  return <div className="my-1 ml-[3px] mr-[3px] w-[2px] shrink-0 border-l-2 border-dotted border-[#9aa0b8]" />;
}

function Sep() {
  return <div className="mx-[2px] my-[3px] w-px shrink-0 bg-[#9095ab]" />;
}

function Edge() {
  return <div className="ml-[3px] w-px shrink-0 bg-[#9298b2]" />;
}

function Tools({ names, className, active = [] }: { names: string[]; className: string; active?: string[] }) {
  return (
    <div className={`flex shrink-0 ${className}`}>
      {names.map((n) => (
        <button
          key={n}
          aria-label={n}
          className={`flex min-w-0 flex-1 items-center justify-center ${active.includes(n) ? "my-[2px] rounded-[3px] border border-[#70769c] bg-[#bcc1dc]" : ""}`}
        >
          <Icon name={n} />
        </button>
      ))}
    </div>
  );
}

type Tool = [name: string, menu?: boolean];

function Column({ tools, className, active }: { tools: Tool[]; className: string; active?: string }) {
  return (
    <div className={`grid shrink-0 auto-rows-fr ${className}`}>
      {tools.map(([n, menu], i) => (
        <div key={i} className="flex items-center pl-[2px]">
          <button
            aria-label={n}
            className={`flex h-full w-[15px] items-center justify-center ${active === n ? "rounded-[3px] border border-[#70769c] bg-[#bcc1dc]" : ""}`}
          >
            <Icon name={n} />
          </button>
          {menu && (
            <span className="pl-px">
              <Caret />
            </span>
          )}
        </div>
      ))}
    </div>
  );
}

function TitleBar() {
  return (
    <header className="flex h-[19px] shrink-0 items-stretch bg-linear-to-b from-[#e4e4e5] to-[#d3d4d9]">
      <div className="flex w-[80px] items-center gap-[2px] bg-linear-to-b from-[#d9dae2] to-[#c2c4d2] pl-[2px]">
        <Icon name="sw" className="size-[13px]" />
        <span className="font-['DejaVu_Sans',sans-serif] text-[9px] leading-[12px] text-[#83858e]">
          <b>Solid</b>Works
        </span>
      </div>
      <button aria-label="Menu" className="flex w-[6px] items-center justify-center border-r border-[#a1a4b3] bg-[#b7bacb] text-[#555]">
        <Caret className="-rotate-90" />
      </button>
      <div className="flex pl-[15px]">
        {["new", "open", "save"].map((n) => (
          <div key={n} className="flex">
            <Tools names={[n]} className="w-[15px]" />
            <MenuCaret />
          </div>
        ))}
        <Tools names={["traffic", "print"]} className="w-[28px]" />
        <MenuCaret />
        <Tools names={["undo"]} className="w-[15px]" />
        <MenuCaret />
        <Tools names={["redo"]} className="w-[14px]" />
        <MenuCaret />
        <div className="my-[2px] flex w-[22px] rounded-[3px] border border-[#777c9c] bg-[#c6c9db]">
          <Tools names={["cursor"]} className="w-[12px]" />
          <MenuCaret />
        </div>
        <Tools names={["checklist"]} className="w-[15px]" />
        <MenuCaret />
      </div>
      <h1 className="flex-1 self-center pl-[121px] text-[7px] leading-[10px] text-[#3c3e45]">Tubo forato.SLDPRT *</h1>
      <div className="flex w-[122px] items-center">
        <label className="flex h-[13px] w-full items-center rounded-full border border-[#9a9dab] bg-linear-to-b from-[#eceef5] to-white">
          <Icon name="magnify" className="size-[13px]" />
          <Caret />
          <input aria-label="Ricerca" defaultValue="Ricerca SolidWorks" className="w-full min-w-0 bg-transparent pl-[2px] text-[7px] leading-[10px] text-black outline-none" />
        </label>
      </div>
      <div className="flex w-[70px] items-center">
        <Tools names={["help"]} className="w-4" />
        <MenuCaret />
        <Tools names={["minimize", "restore", "close"]} className="w-[45px]" />
      </div>
    </header>
  );
}

function CommandBar() {
  return (
    <div className="flex h-[19px] shrink-0 items-stretch border-t border-white bg-linear-to-b from-[#e9ecf7] to-[#c6cade]">
      <Handle />
      <Tools names={["gridA", "target"]} className="w-[29px]" />
      <Sep />
      <div className="my-[2px] flex w-[22px] shrink-0 rounded-[3px] border border-[#777c9c] bg-[#cfd3e6]">
        <Tools names={["cursor"]} className="w-3" />
        <MenuCaret />
      </div>
      <Tools names={["open"]} className="w-[15px]" />
      <Sep />
      <Tools names={["pie"]} className="w-[15px]" />
      <Edge />
      <Handle />
      <Tools
        names={["cFront", "cBack", "cLeft", "cRight", "cTop", "cBottom", "iso1", "iso2", "iso3", "wedge", "solidBlue"]}
        className="w-[158px]"
      />
      <MenuCaret />
      <Tools
        names={["zoomGrey", "refresh", "wire", "wireDash", "wireOpen", "shadedEdge", "shaded", "section", "axis", "axisCut"]}
        active={["shadedEdge", "section"]}
        className="w-[144px]"
      />
      <Edge />
      <Handle />
      <Tools
        names={["clip", "solidGrey", "anchor", "hook", "corner", "swirl", "ramp", "press", "sheetG", "globe"]}
        className="w-[144px]"
      />
      <MenuCaret />
      <Tools
        names={["post", "boxY", "boxG", "boxGrid", "dimDown", "dimUp", "photo", "sphereG", "shellG", "sphereO", "network", "blocksG"]}
        active={["photo"]}
        className="w-[173px]"
      />
      <Edge />
    </div>
  );
}

function DisabledSelect({ label, className }: { label: string; className: string }) {
  return (
    <div className={`relative my-[3px] mr-[2px] shrink-0 border border-[#8d8d8d] bg-[#d6d0c7] ${className}`}>
      <select aria-label={label} disabled className="block h-full w-full appearance-none" />
      <span className="pointer-events-none absolute inset-y-0 right-0 flex w-[9px] items-center justify-center border border-[#8d8a84] border-l-white border-t-white text-[#8b8882]">
        <Caret className="" />
      </span>
    </div>
  );
}

function FormatBar() {
  return (
    <div className="flex h-[19px] shrink-0 items-stretch border-t border-white bg-linear-to-b from-[#e9ecf7] to-[#c6cade]">
      <Handle />
      <Tools names={["blockG", "bucket", "lines", "dashes", "flange"]} className="w-[72px]" />
      <Edge />
      <Handle />
      <Tools names={["fontA"]} className="w-[17px]" />
      <DisabledSelect label="Carattere" className="w-[103px]" />
      <DisabledSelect label="Dimensione carattere" className="w-[23px]" />
      <input aria-label="Altezza" disabled className="my-[3px] w-[36px] shrink-0 border border-r-0 border-[#6f6f6f] bg-[#d6d0c7]" />
      <Sep />
      <Tools names={["A", "B", "I", "U", "S"]} className="w-[72px]" />
      <Sep />
      <Tools names={["alignL", "alignC", "alignR"]} className="w-[43px]" />
      <Sep />
      <Tools names={["fit", "gaps", "bullets", "numbers", "indentL", "indentR"]} className="w-[86px]" />
      <Edge />
      <Handle />
      <Tools names={["smartDim"]} className="w-[15px]" />
      <MenuCaret />
      <Tools
        names={["dimGrey", "abc", "painter", "note", "balloon", "balloons", "finish", "weld", "frameG", "datum", "area", "hole", "tri", "hatch", "blockA"]}
        className="w-[216px]"
      />
      <MenuCaret />
      <Tools names={["center", "centerLine"]} className="w-[29px]" />
      <button aria-label="Altri comandi" className="flex-1 text-[10px] leading-[14px] text-[#333]">
        »
      </button>
    </div>
  );
}

const featureTools: Tool[] = [
  ["extrude", true], ["cutY", true], ["filletY", true], ["rib"], ["shellY"], ["draft"], ["dome"], ["linkG"], ["mirror"], ["surface"],
  ["wrap"], ["intersect"], ["linPat", true], ["refGeo", true], ["curve", true], ["instant"], ["mirror"], ["scales"], ["sketchEdit"], ["swap"],
];

const assemblyTools: Tool[] = [
  ["asm1", true], ["asm2"], ["asm3"], ["clipG"], ["dotsG", true], ["plateG"], ["tagG", true], ["washers"],
  ["greenComp", true], ["refGeo", true], ["gears"], ["bom"], ["explode"], ["explode2"], ["explode3"],
];

const sketchTools: Tool[] = [
  ["ln", true], ["rect", true], ["slot", true], ["circ", true], ["arc", true], ["spline", true], ["ellipse", true], ["filletG", true], ["polygon"],
  ["textSk"], ["point"], ["planeSk"], ["mirrorA"], ["sketchG"], ["trimG", true], ["convert", true], ["offset"], ["mirG"],
  ["grid9", true], ["moveG", true], ["relG", true], ["plusLine"], ["rapid", true], ["ySketch"], ["repair"], ["pick1"], ["pick2"],
];

function ColumnHandle() {
  return <div className="mx-[3px] my-[3px] shrink-0 border-t-2 border-dotted border-[#9aa0b8]" />;
}

function LeftBar() {
  return (
    <aside className="flex w-[26px] shrink-0 flex-col bg-linear-to-r from-[#eceffa] to-[#c5c9de]">
      <ColumnHandle />
      <Column tools={featureTools} className="h-[288px]" active="instant" />
      <div className="mt-[3px] h-px shrink-0 bg-[#9298b2]" />
      <ColumnHandle />
      <Column tools={assemblyTools} className="h-[216px]" />
      <button aria-label="Altri comandi" className="mx-auto mt-auto w-3 rotate-90 pb-px text-[9px] leading-[12px] text-[#333]">
        »
      </button>
    </aside>
  );
}

function RightBar() {
  return (
    <aside className="flex w-[27px] shrink-0 flex-col bg-[#bcc3d3]">
      <div className="border-b border-[#8d93aa] bg-linear-to-r from-[#eceffa] to-[#c5c9de] pb-[3px]">
        <ColumnHandle />
        <Column tools={[["sketch", true], ["smartDim", true], ["sketchG"]]} className="h-[43px]" />
        <div className="mb-[2px] mt-[2px] h-px bg-[#9298b2]" />
        <Column tools={sketchTools} className="h-[389px]" />
      </div>
    </aside>
  );
}

const features: { icon: string; label: string; open?: boolean }[] = [
  { icon: "sensors", label: "Sensori" },
  { icon: "annot", label: "Annotazioni", open: true },
  { icon: "cutlist", label: "Elenco elementi(1)", open: true },
  { icon: "lights", label: "Luci, videocamere e scenografie", open: true },
  { icon: "equations", label: "Equazioni", open: true },
  { icon: "material", label: "AISI 304" },
  { icon: "plane", label: "Piano frontale" },
  { icon: "plane", label: "Piano superiore" },
  { icon: "plane", label: "Piano destro" },
  { icon: "origin", label: "Origine" },
  { icon: "sheetM", label: "Lamiera1" },
  { icon: "baseFlange", label: "Base-Flangia1", open: true },
  { icon: "cutExt", label: "Taglio-Estrusione1", open: true },
  { icon: "cutExt", label: "Taglio-Estrusione2", open: true },
  { icon: "cutExt", label: "Taglio-Estrusione3", open: true },
  { icon: "axisLine", label: "Asse1" },
  { icon: "circPat", label: "RipetizioneCircolare1" },
  { icon: "flat", label: "Ripetizione piatta1", open: true },
];

function FeatureTree() {
  return (
    <section className="flex w-[150px] shrink-0 flex-col overflow-hidden border-r border-[#5a76a8] bg-[#e1e4ec]">
      <div className="flex h-[17px] shrink-0 items-end gap-[2px] bg-[#c9cddd] pl-[2px]">
        {["treePart", "props", "config", "dimxpert", "display"].map((n, i) => (
          <button
            key={n}
            aria-label={n}
            className={`flex h-[15px] w-4 items-center justify-center rounded-t-[3px] border border-b-0 border-[#8a8fa9] ${i === 0 ? "bg-[#e9ebf3]" : "bg-[#bdc1d4]"}`}
          >
            <Icon name={n} />
          </button>
        ))}
        <button aria-label="Espandi" className="ml-auto pr-[3px] text-[10px] leading-[14px] text-[#444]">
          »
        </button>
      </div>
      <label className="mt-px flex h-[11px] shrink-0 items-center rounded-full border border-[#9599ab] bg-white pl-1">
        <Icon name="funnel" className="size-2" />
        <input aria-label="Filtro" className="w-full min-w-0 text-[7px] leading-[8px] outline-none" />
      </label>
      <div className="mt-[2px] flex h-[11px] shrink-0 items-center gap-px whitespace-nowrap">
        <Icon name="treePart" className="size-[11px]" />
        <span className="whitespace-pre">Tubo forato  (Default&lt;&lt;Default&gt;_Stato di vis</span>
      </div>
      <ul className="relative grid h-[203px] shrink-0 auto-rows-fr border-b border-[#2f5fae]">
        <li className="absolute bottom-1 left-[6px] top-0 border-l border-dotted border-[#9a9daa]" />
        {features.map((f) => (
          <li key={f.label} className="relative flex items-center whitespace-nowrap pl-[3px]">
            {f.open ? (
              <button aria-label="Apri" className="flex size-[6px] items-center justify-center border border-[#a0a4b0] bg-[#f4f5f8] text-[6px] leading-none text-[#222]">
                +
              </button>
            ) : (
              <span className="ml-[3px] w-[3px] border-t border-dotted border-[#9a9daa]" />
            )}
            <span className="ml-[2px] flex w-[12px] justify-center">
              <Icon name={f.icon} className="size-[11px]" />
            </span>
            <span className="pl-[1px]">{f.label}</span>
          </li>
        ))}
      </ul>
      <div className="mt-auto flex h-[10px] shrink-0 items-stretch bg-[#eeeeec]">
        <button aria-label="Scorri a sinistra" className="flex w-[9px] items-center justify-center text-black">
          <Caret className="rotate-90" />
        </button>
        <div className="w-[98px] border border-[#7d7b76] border-l-white border-t-white bg-[#d5d1c8]" />
        <button aria-label="Scorri a destra" className="ml-auto flex w-[9px] items-center justify-center text-black">
          <Caret className="-rotate-90" />
        </button>
      </div>
    </section>
  );
}

function Model() {
  return (
    <svg className="absolute inset-0 size-full" aria-hidden="true">
      <path d="M9 215h567v72c-30 1-50-7-80-7l-300 7H9z" fill="#abb0d5" stroke="#3b4366" />
      <path d="M502 250c9 2 9 14 0 16z" fill="#6aa3f4" stroke="#2b3a78" />
      <path d="M576 215v115" stroke="#1525a5" strokeWidth="1.500" strokeDasharray="7 2 2 2" />
      <path d="M574 305l2-5 2 5zM574 331h5M574 328l4 5M578 328l-4 5" fill="#1525a5" stroke="#1525a5" />
      <text x="576" y="213" fontSize="8" fill="#1c3b9c">As</text>
      <g opacity=".55">
        <path d="M534 26h15l7 14h-16z" fill="#8dbaf3" />
        <path d="M534 26l6 14v-7zM549 26l7 14-8-3z" fill="#b7d2f7" />
        <path d="M540 38l5-11 5 11" fill="none" stroke="#a58ae0" />
      </g>
      <path d="M562 43v9M558 48l7-1" stroke="#6f5ee8" fill="none" />
      <path d="M10 505h14" stroke="#1a1fa8" strokeWidth="2" />
      <path d="M13 501l-7 4 7 4z" fill="#1a1fa8" />
      <path d="M25 503v-14" stroke="#2c8a3c" strokeWidth="1.500" />
      <path d="M22 492l3-7 3 7z" fill="#2c8a3c" />
      <circle cx="25" cy="505" r="3" fill="#b01326" />
      <text x="22" y="484" fontSize="7" fill="#1b6b3a">Y</text>
      <text x="2" y="508" fontSize="7" fill="#1a2ba0">Z</text>
    </svg>
  );
}

function Viewport() {
  const hud: Tool[] = [
    ["zoomFit"], ["magnify"], ["pen"], ["refreshLt"], ["mirror"], ["shaded", true], ["iso2", true], ["glasses", true], ["pie", true], ["display", true],
  ];
  return (
    <main className="flex min-w-0 flex-1 flex-col">
      <div className="flex min-h-0 flex-1">
        <div className="relative min-w-0 flex-1 overflow-hidden bg-linear-to-b from-[#2f70fb] via-[#5995f8] to-[#88b7f5]">
          <Model />
          <div className="relative flex items-center pl-[205px] pr-1 pt-[2px]">
            <div className="flex opacity-60">
              {hud.map(([n, menu], i) => (
                <div key={i} className="flex w-auto">
                  <Tools names={[n]} className="w-[14px]" />
                  {menu && <MenuCaret />}
                </div>
              ))}
            </div>
            <Tools names={["hudMin", "hudRestore", "hudClose"]} className="ml-auto w-[44px]" />
          </div>
          <button aria-label="Comprimi pannello" className="absolute left-0 top-[266px] flex h-[18px] w-[5px] flex-col items-center justify-around rounded-r-[2px] bg-[#e9ecf6] py-[2px] text-[#223]">
            {[0, 1, 2].map((i) => (
              <span key={i} className="size-px bg-black" />
            ))}
          </button>
        </div>
        <div className="relative flex w-[10px] shrink-0 flex-col bg-[#edecea]">
          <div className="absolute right-0 top-[37px] flex w-[14px] flex-col">
            {["home", "library", "folder", "swRed", "palette", "pie", "custProps"].map((n) => (
              <button key={n} aria-label={n} className="flex h-[15px] items-center justify-center border border-r-0 border-[#9b9a98] bg-[#d3d1cf]">
                <Icon name={n} className="size-[11px]" />
              </button>
            ))}
            <button aria-label="Scorri su" className="ml-1 flex h-[10px] items-center justify-center border border-[#7d7b76] border-l-white border-t-white bg-[#d9d6ce]">
              <Caret className="rotate-180" />
            </button>
          </div>
          <button aria-label="Scorri giù" className="mb-[3px] mt-auto flex h-[10px] items-center justify-center border border-[#7d7b76] border-l-white border-t-white bg-[#d9d6ce]">
            <Caret />
          </button>
        </div>
      </div>
      <div className="flex h-[9px] shrink-0 bg-[#edecea]">
        <button aria-label="Scorri a sinistra" className="flex w-[11px] items-center justify-center border-r border-[#77756f] bg-[#d9d6ce] text-[#85827c]">
          <Caret className="rotate-90" />
        </button>
        <button aria-label="Scorri a destra" className="ml-auto flex w-[9px] items-center justify-center text-[#85827c]">
          <Caret className="-rotate-90" />
        </button>
        <div className="w-[3px] border-x border-[#44433f]" />
        <div className="w-[10px] bg-[#d5d1c8]" />
      </div>
    </main>
  );
}

const raised = "border border-[#6f6c66] border-l-white border-t-white bg-[#d6d2ca]";
const sunken = "border border-[#f4f2ee] border-l-[#66635d] border-t-[#66635d] bg-white";

function ComboBox({ id, value, className = "", icon }: { id: string; value: string; className?: string; icon?: string }) {
  return (
    <div className={`relative flex h-[14px] flex-1 items-center ${sunken}`}>
      {icon && <Icon name={icon} className="ml-[3px] size-[11px]" />}
      <select id={id} className={`h-full w-full min-w-0 appearance-none pl-[2px] pr-3 ${className}`}>
        <option>{value}</option>
      </select>
      <span className={`pointer-events-none absolute inset-y-0 right-0 flex w-[9px] items-center justify-center text-black ${raised}`}>
        <Caret className="" />
      </span>
    </div>
  );
}

const places = [
  { icon: "recent", label: "Documenti recenti\nDocumenti" },
  { icon: "desktop", label: "Desktop" },
  { icon: "documents", label: "Documenti" },
  { icon: "star", label: "Preferenze" },
  { icon: "netPlaces", label: "La mia rete\nUbicazioni" },
];

function SaveDialog() {
  return (
    <div
      role="dialog"
      aria-label="Salva con nome"
      className="absolute left-[202px] top-[177px] flex h-[263px] w-[477px] flex-col border border-[#5c5a55] border-l-[#e9e7e2] border-t-[#e9e7e2] bg-[#d5d1c8] p-[2px]"
    >
      <div className="flex h-[11px] shrink-0 items-center bg-linear-to-r from-[#0a246a] to-[#a6caf0] pr-px">
        <h2 className="flex-1 text-[7px] font-bold leading-[10px] text-white">Salva con nome</h2>
        <button aria-label="Guida" className={`h-[9px] w-[10px] text-[7px] font-bold leading-[7px] text-black ${raised}`}>?</button>
        <button aria-label="Chiudi" className={`ml-px h-[9px] w-[10px] text-[8px] font-bold leading-[6px] text-black ${raised}`}>×</button>
      </div>
      <div className="flex min-h-0 flex-1 gap-2 pb-[24px] pl-[3px] pr-[3px] pt-1">
        <nav className="flex w-[58px] shrink-0 flex-col border border-[#6c6a66] border-b-white border-r-white bg-[#808080] pt-[3px]">
          {places.map((p) => (
            <button key={p.icon} className="flex h-[44px] shrink-0 flex-col items-center gap-px text-center leading-[8px] text-[#e4e4e4] last:h-[38px]">
              <Icon name={p.icon} className="size-[20px]" />
              <span className="whitespace-pre">{p.label}</span>
            </button>
          ))}
        </nav>
        <form className="min-w-0 flex-1">
          <div className="flex items-center">
            <label htmlFor="dir" className="w-[35px] pl-[3px]">Salva in:</label>
            <ComboBox id="dir" value="Rar$DI00.999" icon="folder" />
            <div className="flex w-[102px] items-center gap-[3px] pl-1">
              {["back", "up", "newFolder", "views"].map((n) => (
                <button key={n} type="button" aria-label={n}>
                  <Icon name={n} className="size-[12px]" />
                </button>
              ))}
              <span className="-ml-[2px] text-black">
                <Caret className="" />
              </span>
            </div>
          </div>
          <div className={`mt-[3px] h-[104px] ${sunken}`}>
            <table className="h-full w-full table-fixed border-collapse text-left">
              <thead>
                <tr className="h-[11px] bg-[#d5d1c8] leading-[9px]">
                  <th className="w-[113px] border-b border-r border-[#77746e] pl-[3px] font-normal">
                    <span className="flex items-center gap-1">Nome <span className="text-[#96938c]"><Caret className="rotate-180" /></span></span>
                  </th>
                  <th className="w-[60px] border-b border-r border-[#77746e] pr-[3px] text-right font-normal">Dimensione</th>
                  <th className="w-[75px] border-b border-r border-[#77746e] pl-[3px] font-normal">Tipo</th>
                  <th className="w-[75px] border-b border-r border-[#77746e] pl-[3px] font-normal">Data ultima modifica</th>
                  <th className="border-b border-[#77746e]" />
                </tr>
              </thead>
              <tbody>
                <tr>
                  <td className="bg-[#f5f5f5]" />
                  <td colSpan={4} />
                </tr>
              </tbody>
            </table>
          </div>
          <div className="mt-[5px] flex items-center">
            <label htmlFor="file" className="w-[42px]">Nome file:</label>
            <div className={`flex h-[14px] flex-1 ${sunken}`}>
              <input id="file" defaultValue="Ripetizione piatta - Tubo forato.DXF" className="w-full min-w-0 pl-px outline-none" />
              <button type="button" aria-label="Elenco nomi" className={`flex w-[9px] shrink-0 items-center justify-center ${raised}`}>
                <Caret className="" />
              </button>
            </div>
            <button type="button" className="ml-1 h-[14px] w-[34px] border border-[#44423e] bg-[#d6d2ca]">Salva</button>
            <button type="button" aria-label="Opzioni di salvataggio" className={`flex h-[14px] w-[9px] items-center justify-center ${raised}`}>
              <Caret className="" />
            </button>
          </div>
          <div className="mt-[5px] flex items-center">
            <label htmlFor="type" className="w-[42px]">Salva come:</label>
            <ComboBox id="type" value="Dxf (*.dxf)" className="bg-[#0a246a] text-white" />
            <button type="button" className={`ml-1 h-[14px] w-[43px] ${raised}`}>Annulla</button>
          </div>
          <div className="mt-1 flex items-center">
            <label htmlFor="desc" className="w-[42px]">Description:</label>
            <input id="desc" className={`h-[13px] w-[204px] ${sunken}`} />
          </div>
          <div className="mt-[5px] flex justify-end pr-[9px]">
            <button type="button" className={`h-[14px] w-[34px] ${raised}`}>Opzioni...</button>
          </div>
        </form>
      </div>
      <svg viewBox="0 0 8 8" className="absolute bottom-px right-px size-2" aria-hidden="true">
        <path d="M1 8l7-7M3.500 8L8 3.500M6 8l2-2" stroke="#88857e" />
      </svg>
    </div>
  );
}

function Ridge() {
  return <span className="mx-[2px] h-[10px] w-[3px] border-x border-[#8a949f] bg-[#c6ced6]" />;
}

function StatusBar() {
  return (
    <footer className="flex h-[13px] shrink-0 items-center bg-[#a9b3be] pl-[2px] text-black">
      <span className="flex-1">SolidWorks Professional 2010</span>
      <Ridge />
      <Ridge />
      <span className="border border-[#7f8893] border-b-[#d5dbe1] border-r-[#d5dbe1] leading-[9px]">ModificaParte</span>
      <Ridge />
      <Ridge />
      <Icon name="helpGreen" className="ml-1 mr-[29px] size-[9px]" />
      <Icon name="tag" className="mr-2 size-[11px]" />
    </footer>
  );
}

const windows = [
  { icon: "media", label: "Win..." },
  { icon: "folder", label: "063..." },
  { icon: "outlook", label: "Post..." },
  { icon: "acad", label: "Cilin..." },
  { icon: "rar", label: "Tub..." },
  { icon: "swRed", label: "Soli...", active: true },
  { icon: "tulip", label: "Appi..." },
];

function Groove() {
  return <span className="h-[14px] w-[2px] shrink-0 border-l border-[#8e8b84] bg-white" />;
}

function Taskbar() {
  return (
    <footer className="flex h-[20px] shrink-0 items-center whitespace-nowrap border-t border-[#efede9] bg-[#d5d1c8] pl-px text-black">
      <button className={`flex h-[15px] w-[33px] items-center gap-px pl-px font-bold ${raised}`}>
        <Icon name="win" className="size-[11px]" />
        Start
      </button>
      <span className="w-[5px]" />
      <Groove />
      <Tools names={["acad", "ie", "notepad", "outlook", "desk", "brown", "swRed", "blueDoc", "media", "sync"]} className="ml-[1px] w-[144px]" />
      <span className="w-4" />
      <Groove />
      <div className="flex gap-[3px] pl-[2px]">
        {windows.map((w) => (
          <button
            key={w.label}
            className={`flex h-[15px] w-[37px] items-center gap-[2px] overflow-hidden pl-px ${w.active ? "border border-white border-l-[#55534e] border-t-[#55534e] bg-[#eceae6] font-bold" : raised}`}
          >
            <Icon name={w.icon} className="size-[11px]" />
            {w.label}
          </button>
        ))}
      </div>
      <span className="w-[6px]" />
      <Groove />
      <a href="#mecoba" className="pl-[2px]">Disegni_Mecoba su 'Server Mecoba (Serve</a>
      <a href="#abitare" className="flex items-center gap-px pl-px">
        <Icon name="folder" className="size-[10px]" />
        A3 Abitare se
      </a>
      <button aria-label="Altre barre" className="w-2 self-start text-[9px] leading-[12px]">»</button>
      <Groove />
      <Icon name="helpBox" className="ml-1 size-[10px]" />
      <Icon name="restoreTray" className="ml-1 size-[9px]" />
      <div className="ml-auto mr-px flex h-[15px] w-[73px] items-center justify-between border border-[#8e8b84] border-b-white border-r-white px-[2px]">
        {["acad", "outlook", "shieldG", "trayNet"].map((n) => (
          <Icon key={n} name={n} className="size-[10px]" />
        ))}
        <time className="pl-1 pr-px">11:05</time>
      </div>
    </footer>
  );
}

export default function App() {
  return (
    <div className="relative flex h-screen flex-col overflow-hidden bg-[#d5d1c8] font-['Liberation_Sans',Arial,sans-serif] text-[7px] leading-[10px] text-[#1b1c20]">
      <TitleBar />
      <CommandBar />
      <FormatBar />
      <div className="flex min-h-0 flex-1">
        <LeftBar />
        <FeatureTree />
        <Viewport />
        <RightBar />
      </div>
      <StatusBar />
      <Taskbar />
      <SaveDialog />
    </div>
  );
}
